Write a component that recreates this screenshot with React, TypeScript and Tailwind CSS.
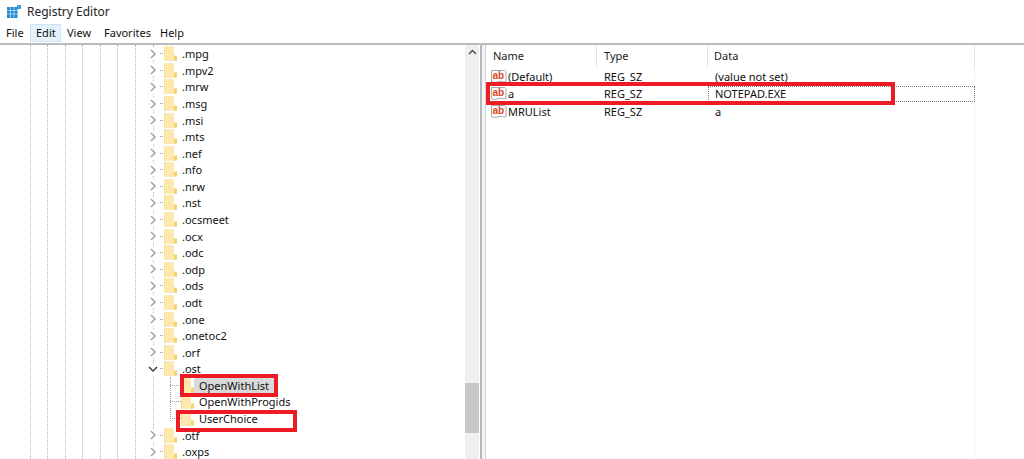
const treeRows = [
  ".mpg", ".mpv2", ".mrw", ".msg", ".msi", ".mts", ".nef", ".nfo", ".nrw", ".nst", ".ocsmeet", ".ocx", ".odc",
  ".odp", ".ods", ".odt", ".one", ".onetoc2", ".orf", ".ost", "OpenWithList", "OpenWithProgids", "UserChoice",
  ".otf", ".oxps",
];

const children = ["OpenWithList", "OpenWithProgids", "UserChoice"];
const guideLines = [30, 47, 65, 82, 100, 117, 135, 153];

const values = [
  { name: "(Default)", type: "REG_SZ", data: "(value not set)" },
  { name: "a", type: "REG_SZ", data: "NOTEPAD.EXE" },
  { name: "MRUList", type: "REG_SZ", data: "a" },
];

function AppIcon() {
  return (
    <svg width="14" height="14" viewBox="0 0 14 14" className="shrink-0">
      <rect x="0" y="2" width="10.500" height="11" fill="#1e88d2" />
      <path d="M3.500 2v11M7 2v11M0 5.500h10.500M0 9h10.500" stroke="#bfe0f5" strokeWidth="0.8" />
      <rect x="10" y="0" width="4" height="4" fill="#3f9fd6" />
    </svg>
  );
}

function Folder() {
  return (
    <svg width="13" height="15" viewBox="0 0 13 15" className="shrink-0">
      <path d="M0 0.500h9.500v10.500h3v3.500h-12.500z" fill="#f8d673" />
      <rect x="0.500" y="1" width="9.500" height="13" fill="#fde9ad" />
      <rect x="10" y="9.500" width="3" height="5" fill="#f6d26a" />
    </svg>
  );
}

function ChevronRight() {
  return (
    <svg width="8" height="10" viewBox="0 0 8 10" className="shrink-0">
      <path d="M2 1l4 4-4 4" fill="none" stroke="#a6a6a6" strokeWidth="1.600" />
    </svg>
  );
}

function ChevronDown() {
  return (
    <svg width="10" height="8" viewBox="0 0 10 8" className="shrink-0">
      <path d="M1 2l4 4 4-4" fill="none" stroke="#404040" strokeWidth="1.500" />
    </svg>
  );
}

function StringIcon() {
  return (
    <svg width="16" height="14" viewBox="0 0 16 14" className="shrink-0">
      <path d="M0.500 0.500h13.500l1 1v10c-3 1.500-4-1-7 0s-4.500 1.500-7.500 0z" fill="#fff" stroke="#a8a8a8" />
      <text x="1.500" y="9" fontSize="10" fontWeight="700" fill="#e0431c" fontFamily="Liberation Sans, sans-serif">ab</text>
    </svg>
  );
}

function TreeRow({ label }: { label: string }) {
  const isChild = children.includes(label);
  const isOpen = label === ".ost";
  return (
    <div className="flex h-[16.58px] items-center">
      {isChild ? (
        <div className="flex w-[181px] shrink-0 justify-end">
          <div className="w-[11px] border-t border-dotted border-[#9a9a9a]" />
        </div>
      ) : (
        <div className="flex w-[164px] shrink-0 items-center">
          <div className="ml-[148px] flex h-[12px] w-[10px] items-center justify-center bg-white">
            {isOpen ? <ChevronDown /> : <ChevronRight />}
          </div>
          <div className="ml-[2px] w-[3px] border-t border-dotted border-[#9a9a9a]" />
        </div>
      )}
      <Folder />
      <span
        className={
          label === "OpenWithList"
            ? "bg-[#d9d9d9] pr-[7px] pl-[5px] text-[11px] leading-[15px] text-[#111]"
            : "px-[5px] text-[11px] leading-[15px] text-[#111]"
        }
      >
        {label}
      </span>
    </div>
  );
}

export default function App() {
  return (
    <div className="flex h-[459px] w-[1024px] flex-col overflow-hidden bg-white font-['Noto_Sans',sans-serif] text-[11px] text-[#111]">
      {/* Title bar */}
      <div className="flex h-[23px] shrink-0 items-center gap-[6px] pl-[7px]">
        <AppIcon />
        <span className="text-[12px] text-[#222]">Registry Editor</span>
      </div>

      {/* Menu */}
      <div className="flex h-[22px] shrink-0 items-center border-b-2 border-[#b9bcbf] pl-[1px] text-[11px]">
        <span className="w-[29px] pl-[5px]">File</span>
        <span className="h-[18px] w-[31px] border border-[#cce4f7] bg-[#e5f1fb] pl-[5px] leading-[15px]">Edit</span>
        <span className="w-[37px] pl-[6px]">View</span>
        <span className="w-[56px] pl-[6px]">Favorites</span>
        <span className="pl-[6px]">Help</span>
      </div>

      <div className="relative flex min-h-0 flex-1">
        {/* Tree pane */}
        <div className="relative flex w-[480px] shrink-0 overflow-hidden">
          <div className="relative min-w-0 flex-1 pt-[0.5px]">
            {guideLines.map((x) => (
              <div
                key={x}
                className="absolute top-0 bottom-0 border-l border-dotted border-[#b8b8b8]"
                style={{ left: x }}
              />
            ))}
            <div className="absolute top-[332px] left-[170px] h-[44px] border-l border-dotted border-[#9a9a9a]" />
            <div className="relative">
              {treeRows.map((label) => (
                <TreeRow key={label} label={label} />
              ))}
            </div>
          </div>
          {/* Scrollbar */}
          <div className="mr-[1px] flex w-[14px] shrink-0 flex-col bg-[#f0f0f0]">
            <div className="flex h-[14px] items-center justify-center">
              <svg width="9" height="6" viewBox="0 0 9 6">
                <path d="M1 5l3.500-3.500L8 5" fill="none" stroke="#505050" strokeWidth="1.500" />
              </svg>
            </div>
            <div className="mt-[324px] h-[50px] bg-[#c8c8c8]" />
          </div>
        </div>

        {/* Splitter */}
        <div className="w-[2px] shrink-0 bg-[#b4b8bc]" />
        <div className="w-[3px] shrink-0 bg-[#f5f5f5]" />
        <div className="w-[1px] shrink-0 bg-[#ccd0d4]" />

        {/* List pane */}
        <div className="relative min-w-0 flex-1">
          <div className="flex h-[23px] items-center text-[#222]">
            <div className="flex h-full w-[111px] items-center border-r border-[#e5e5e5] pl-[7px]">Name</div>
            <div className="flex h-full w-[111px] items-center border-r border-[#e5e5e5] pl-[7px]">Type</div>
            <div className="flex h-full w-[267px] items-center border-r border-[#e5e5e5] pl-[6px]">Data</div>
          </div>
          <div className="absolute top-[23px] bottom-0 left-[488px] w-[1px] bg-[#eef5fb]" />
          {values.map((row) => (
            <div key={row.name} className="flex h-[17.500px] items-center">
              <div className="flex w-[111px] items-center gap-[1px] pl-[5px]">
                <StringIcon />
                <span>{row.name}</span>
              </div>
              <div className="w-[111px] pl-[7px]">{row.type}</div>
              <div
                className={
                  row.name === "a"
                    ? "relative h-[16px] w-[267px] border border-dotted border-[#777] pl-[6px] leading-[14px]"
                    : "w-[267px] pl-[7px]"
                }
              >
                {row.data}
              </div>
            </div>
          ))}
        </div>

        {/* Red annotation boxes */}
        <div className="absolute top-[37px] left-[486px] h-[23px] w-[409px] border-4 border-[#ed1c24]" />
        <div className="absolute top-[329px] left-[180px] h-[23px] w-[98px] border-4 border-[#ed1c24]" />
        <div className="absolute top-[365px] left-[176px] h-[22px] w-[121px] border-4 border-[#ed1c24]" />
      </div>
    </div>
  );
}
